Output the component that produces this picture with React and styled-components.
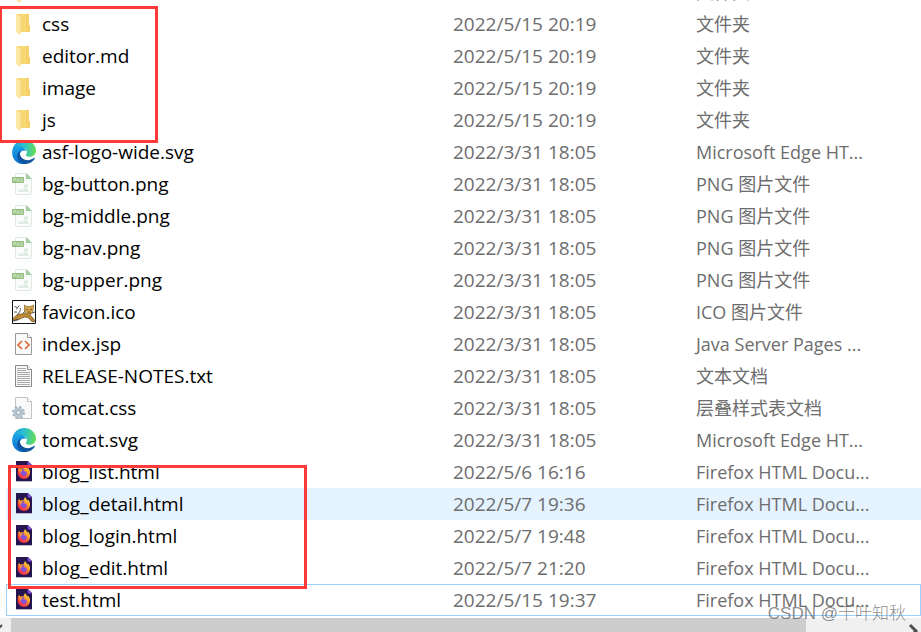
import React from "react";
import styled, { createGlobalStyle } from "styled-components";

const GlobalStyle = createGlobalStyle`
  * { box-sizing: border-box; }
  body {
    margin: 0;
    background: #fff;
    overflow: hidden;
    font-family: "Open Sans", "Noto Sans CJK SC", sans-serif;
  }
`;

const Explorer = styled.main`
  position: relative;
  overflow: hidden;
`;

const FileTable = styled.table`
  display: block;
  margin: -24px 0 2px 6px;
`;

const FileRows = styled.tbody`
  display: block;
`;

const FileRow = styled.tr`
  display: grid;
  grid-template-columns: 447px 243px minmax(0, 1fr);
  align-items: center;
  height: 32px;
  background: ${(p) => (p.$state === "hover" ? "#e5f3ff" : "transparent")};
  box-shadow: ${(p) => (p.$state === "focus" ? "inset 0 0 0 1px #99d1ff" : "none")};
`;

const NameCell = styled.td`
  display: flex;
  align-items: center;
  gap: 6px;
  padding: 0 0 0 6px;
  font-size: 19px;
  line-height: 32px;
  color: #000;
  white-space: nowrap;
`;

const InfoCell = styled.td`
  padding: 0;
  font-size: ${(p) => (p.$wide ? "19px" : "18px")};
  line-height: 32px;
  color: #6d6d6d;
  white-space: nowrap;
`;

const Icon = styled.svg`
  display: block;
  flex: none;
  width: 24px;
  height: 24px;
`;

const Mark = styled.div`
  position: absolute;
  border: 3px solid #ff3838;
  pointer-events: none;
`;

const FolderMark = styled(Mark)`
  top: 6px;
  left: -1px;
  width: 159px;
  height: 137px;
`;

const PageMark = styled(Mark)`
  top: 465px;
  left: 8px;
  width: 299px;
  height: 124px;
`;

const ScrollBar = styled.div`
  display: grid;
  grid-template-columns: 11px minmax(0, 795fr) minmax(0, 98fr) 17px;
  height: 14px;
  overflow: hidden;
  background: #f0f0f0;
`;

const ScrollButton = styled.button`
  padding: 0;
  border: 0;
  height: 14px;
  background: transparent;
  svg { display: block; }
`;

const ScrollThumb = styled.div`
  background: #cdcdcd;
`;

const ScrollTrack = styled.div`
  background: #f0f0f0;
`;

const Watermark = styled.div`
  position: absolute;
  right: 15px;
  bottom: 5px;
  font-family: "Liberation Sans", "Noto Sans CJK SC", sans-serif;
  font-size: 17px;
  line-height: 26px;
  font-weight: 300;
  color: rgba(90, 90, 90, 0.7);
  white-space: nowrap;
`;

function FolderIcon() {
  return (
    <Icon viewBox="0 0 24 24" aria-hidden="true">
      <path d="M5 2h12v11l1 1v6H8z" fill="#f8d775" />
      <path d="M14 2h3v11l1 1v6h-4z" fill="#f5cf68" />
      <path d="M4 2l5 3v16l-1 2-4-3z" fill="#ffe8a2" />
      <path d="M8.500 5v16" stroke="#f6dc8a" fill="none" />
    </Icon>
  );
}

function EdgeIcon() {
  const id = React.useId();
  return (
    <Icon viewBox="0 0 24 24" aria-hidden="true">
      <defs>
        <linearGradient id={id + "top"} x1="0" y1="0.3" x2="1" y2="0.4">
          <stop offset="0" stopColor="#1d9ce0" />
          <stop offset="0.5" stopColor="#2cc1ce" />
          <stop offset="1" stopColor="#68dc58" />
        </linearGradient>
        <linearGradient id={id + "side"} x1="0.2" y1="0" x2="0.5" y2="1">
          <stop offset="0" stopColor="#1ba4e6" />
          <stop offset="1" stopColor="#0869c8" />
        </linearGradient>
      </defs>
      <path d="M.3 11C1 4.500 6 0 12.300 0 19 0 24 5 24 10.500c0 4-3 6.300-6.500 6.300-3 0-4.200-1.300-3.600-2.300 1.300-1.500 1.300-3.700-.4-5.200C10 6.300 3.500 6.500.3 11z" fill={`url(#${id}top)`} />
      <path d="M.1 12C.8 7.700 4.500 6.200 8 6.600c3 .3 5.600 2.100 5.900 4.500-3.900-1.600-6.600 1.200-6.100 4.900.5 4 4 7.200 7.700 7.400C7 26 0 20.500.1 12z" fill={`url(#${id}side)`} />
      <path d="M9 10.500c-2.500 3.300-.4 8.500 5 9.500 3.500.6 6.200-.8 8.200-2.200.6-.3 1 .2.700.7-2.300 4-6.800 6-10.900 5.300C7 22.500 4 18 5.500 14.300 6.200 12.500 7.500 11.200 9 10.500z" fill="#10549e" />
      <path d="M13.800 10.900c-2-.7-4.300 0-4.700 2.100-.8 3.800 3.300 6.800 7.800 6.300 2.200-.2 4.200-1 5.500-1.900.4-.7.200-1-.3-.8-2.600 1.200-8.500 1-8.500-1.200 0-1.100 1.600-2.300.2-4.500z" fill="#fff" />
    </Icon>
  );
}

function PngIcon() {
  return (
    <Icon viewBox="0 0 24 24" aria-hidden="true">
      <path d="M3.500 1.500h11l5 5v15q0 1-1 1h-14q-1 0-1-1z" fill="#fafcf9" stroke="#deeadd" />
      <path d="M14 1l6 6h-6z" fill="#a3cba0" />
      <path d="M0 5h12v6H0z" fill="#91bd7c" />
      <path d="M1.500 10V6.500h2v2h-2M5 10V6.500l2 3V6.500M11 6.500H9v3h2v-1.500" fill="none" stroke="#d8e9cf" strokeWidth=".8" />
      <path d="M6 20c1-3 3-4 5-2 1-3 5-2 6 2z" fill="#dcebe5" />
      <circle cx="14" cy="14" r="2" fill="#dcebe5" />
    </Icon>
  );
}

function TomcatIcon() {
  return (
    <Icon viewBox="0 0 24 24" aria-hidden="true">
      <path d="M.5.5h23v23H.5z" fill="#fff" stroke="#111" />
      <path d="M1 18.500l3-3 4-1.500 5-.5 5 1.500 3 3 2 3-1 1-3-1-2-3-4-1-3 1-4 2-4 1z" fill="#c08a35" stroke="#695326" strokeWidth=".7" />
      <path d="M12.500 5l2 1.500h4L21.500 5l-.5 6-2 3.500-2 1-2.500-1.500-2-3z" fill="#d9a84c" stroke="#806633" strokeWidth=".7" />
      <path d="M14 9l2 1M20 9l-2 1M15.500 12.500l1.500 1 2-1M17 10.500v2" stroke="#54401f" strokeWidth=".8" fill="none" />
      <path d="M5 15c3-3 4-5 3-7M2.500 6.500l3 1 2-2M5.500 7.500l-1 2M2 12h3M1 21l5-2M11 13l2-1.500M20 13l3-1" stroke="#444" strokeWidth=".9" fill="none" />
    </Icon>
  );
}

function PageOutline({ stroke = "#999" }) {
  return (
    <>
      <path d="M3.500 1.500h12l4 4v17h-16z" fill="#f9f9f9" stroke={stroke} />
      <path d="M15.500 1.500v4h4" fill="#fff" stroke={stroke} />
    </>
  );
}

function CodeIcon() {
  return (
    <Icon viewBox="0 0 24 24" aria-hidden="true">
      <PageOutline />
      <path d="M10 9l-4 4 4 4M13 9l4 4-4 4" fill="none" stroke="#dc6535" strokeWidth="1.600" />
    </Icon>
  );
}

function TextIcon() {
  return (
    <Icon viewBox="0 0 24 24" aria-hidden="true">
      <PageOutline stroke="#888" />
      <path d="M5 4.500h9M5 6.500h9M5 8.500h13M5 10.500h13M5 12.500h13M5 14.500h13M5 16.500h13M5 18.500h13M5 20.500h13" stroke="#aaa" fill="none" />
    </Icon>
  );
}

function CssIcon() {
  return (
    <Icon viewBox="0 0 24 24" aria-hidden="true">
      <PageOutline stroke="#c2c2c2" />
      <circle cx="6.500" cy="16.500" r="5.500" fill="none" stroke="#a3b1bd" strokeWidth="2" strokeDasharray="2.300 2.020" />
      <circle cx="6.500" cy="16.500" r="3.500" fill="#eef3f7" stroke="#b3c3cf" strokeWidth="3" />
      <circle cx="6.500" cy="16.500" r="1.800" fill="#fff" stroke="#8199ab" strokeWidth=".8" />
    </Icon>
  );
}

function FirefoxIcon() {
  const id = React.useId();
  return (
    <Icon viewBox="0 0 24 24" aria-hidden="true">
      <defs>
        <linearGradient id={id} x1="0.8" y1="0" x2="0.2" y2="1">
          <stop offset="0" stopColor="#ffe14a" />
          <stop offset="0.4" stopColor="#ff9a26" />
          <stop offset="0.7" stopColor="#fc4b3c" />
          <stop offset="1" stopColor="#e91e68" />
        </linearGradient>
      </defs>
      <path d="M4 2h12l4 4v16H4z" fill="#b9b4c4" />
      <path d="M4 1h12l4 4v16H4z" fill="#26164f" />
      <path d="M15.500 1l4.500 4.500h-4z" fill="#8050ec" />
      <path d="M6 9l1-2 1.500 1.500c1-.5 2-.5 3 0C11.500 7 12.500 6 13.500 5c.2 1.700 1.500 2.700 2.300 3.700V7.500c1.700 1.500 2.400 3.200 2.200 5.500A6 6 0 0 1 12 19 6.100 6.100 0 0 1 5.800 13c0-1.500 0-3 .2-4z" fill={`url(#${id})`} />
      <path d="M8.500 10c1.300-1.300 3-1.200 4.300-.2l-1.500 1.500c2.200-.2 3.700.6 3.500 2.400-.2 1.600-1.600 2.500-3.100 2.300-2.200-.2-3.500-2.500-3.200-6z" fill="#8750dd" />
      <path d="M7 9.500c1.700-.5 3.200 0 3.700 1.200-1.500 0-2.200 1-2.400 2.300z" fill="#ff9a2c" />
    </Icon>
  );
}

const png = { icon: PngIcon, date: "2022/3/31 18:05", type: "PNG 图片文件" };
const folder = { icon: FolderIcon, date: "2022/5/15 20:19", type: "文件夹" };
const edge = { icon: EdgeIcon, date: "2022/3/31 18:05", type: "Microsoft Edge HT..." };
const firefox = { icon: FirefoxIcon, type: "Firefox HTML Docu..." };

const files = [
  { ...folder, name: "" },
  { ...folder, name: "css" },
  { ...folder, name: "editor.md" },
  { ...folder, name: "image" },
  { ...folder, name: "js" },
  { ...edge, name: "asf-logo-wide.svg" },
  { ...png, name: "bg-button.png" },
  { ...png, name: "bg-middle.png" },
  { ...png, name: "bg-nav.png" },
  { ...png, name: "bg-upper.png" },
  { icon: TomcatIcon, name: "favicon.ico", date: "2022/3/31 18:05", type: "ICO 图片文件" },
  { icon: CodeIcon, name: "index.jsp", date: "2022/3/31 18:05", type: "Java Server Pages ..." },
  { icon: TextIcon, name: "RELEASE-NOTES.txt", date: "2022/3/31 18:05", type: "文本文档" },
  { icon: CssIcon, name: "tomcat.css", date: "2022/3/31 18:05", type: "层叠样式表文档" },
  { ...edge, name: "tomcat.svg" },
  { ...firefox, name: "blog_list.html", date: "2022/5/6 16:16" },
  { ...firefox, name: "blog_detail.html", date: "2022/5/7 19:36", state: "hover" },
  { ...firefox, name: "blog_login.html", date: "2022/5/7 19:48" },
  { ...firefox, name: "blog_edit.html", date: "2022/5/7 21:20" },
  { ...firefox, name: "test.html", date: "2022/5/15 19:37", state: "focus" },
];

export default function App() {
  return (
    <Explorer>
      <GlobalStyle />
      <FileTable>
        <FileRows>
          {files.map(({ icon: FileIcon, name, date, type, state }) => (
            <FileRow key={name} $state={state}>
              <NameCell>
                <FileIcon />
                {name}
              </NameCell>
              <InfoCell $wide>{date}</InfoCell>
              <InfoCell>{type}</InfoCell>
            </FileRow>
          ))}
        </FileRows>
      </FileTable>
      <ScrollBar>
        <ScrollButton aria-label="Scroll left">
          <svg width="11" height="14" aria-hidden="true">
            <path d="M-3 12l5-5" stroke="#505050" strokeWidth="2" />
          </svg>
        </ScrollButton>
        <ScrollThumb />
        <ScrollTrack />
        <ScrollButton aria-label="Scroll right">
          <svg width="17" height="14" aria-hidden="true">
            <path d="M6 7l6 6-6 6" fill="none" stroke="#505050" strokeWidth="3" />
          </svg>
        </ScrollButton>
      </ScrollBar>
      <FolderMark />
      <PageMark />
      <Watermark>CSDN @千叶知秋</Watermark>
    </Explorer>
  );
}
